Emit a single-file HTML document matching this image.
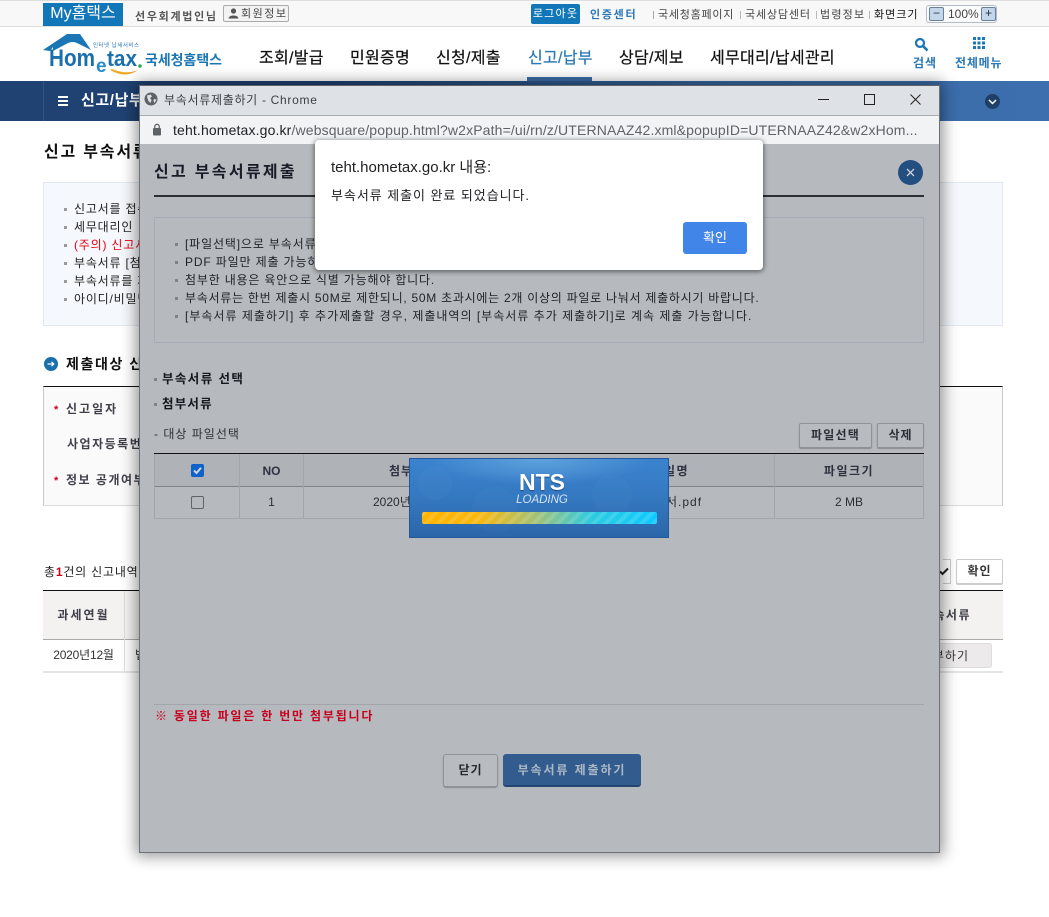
<!DOCTYPE html>
<html lang="ko"><head><meta charset="utf-8"><title>홈택스</title>
<style>
html,body{margin:0;padding:0}
body{width:1049px;height:917px;position:relative;overflow:hidden;background:#fff;font-family:"Liberation Sans","Noto Sans CJK KR","NanumGothic",sans-serif;color:#222}
.a{position:absolute}
.t{position:absolute;white-space:nowrap;line-height:16px;font-size:12px}
.b{font-weight:bold}
.c{text-align:center}
.n{font-size:16px;line-height:20px;color:#111;letter-spacing:.3px;-webkit-text-stroke:.2px currentColor;top:49px}
.sq{position:absolute;width:3px;height:3px;background:#999}
.sq2{position:absolute;width:3px;height:3px;background:#7f8387}
.btn{position:absolute;box-sizing:border-box;border:1px solid #8f9397;border-radius:2px;box-shadow:0 1px 1px #8a8e92;text-align:center;font-weight:bold;font-size:12px;color:#2b3038;background:#b8bcc0}
</style></head><body>
<!-- top bar -->
<div class="a" style="left:0;top:0;width:1049px;height:27px;background:#f8f8f8;border-top:1px solid #ddd;border-bottom:1px solid #ddd;box-sizing:border-box"></div>
<div class="a c" style="left:43px;top:3px;width:80px;height:23px;background:#1177b9;color:#fff;font-size:16px;line-height:22px">My홈택스</div>
<div class="t b" style="left:135px;top:9px;font-size:11px;color:#555;letter-spacing:1.700px">선우회계법인님</div>
<div class="a" style="left:223px;top:5px;width:66px;height:17px;box-sizing:border-box;border:1px solid #aaa;border-radius:2px;background:#f3f3f3"></div>
<svg class="a" style="left:228px;top:8px" width="11" height="11" viewBox="0 0 11 11"><circle cx="5.500" cy="3" r="2.600" fill="#555"/><path d="M0.500 10.500C1 6.500 10 6.500 10.500 10.500Z" fill="#555"/></svg>
<div class="t" style="left:241px;top:6px;font-size:11px;color:#444;letter-spacing:1.500px">회원정보</div>
<div class="a c" style="left:531px;top:4px;width:49px;height:20px;background:#1177b9;border-radius:2px;color:#fff;font-size:11px;line-height:20px;letter-spacing:1.200px">로그아웃</div>
<div class="t b" style="left:590px;top:7px;font-size:11px;color:#2a78b8;letter-spacing:1.700px">인증센터</div>
<div class="a" style="left:653px;top:11px;width:1px;height:8px;background:#aaa"></div>
<div class="t" style="left:658px;top:7px;font-size:11px;color:#444;letter-spacing:.75px">국세청홈페이지</div>
<div class="a" style="left:740px;top:11px;width:1px;height:8px;background:#bbb"></div>
<div class="t" style="left:745px;top:7px;font-size:11px;color:#444;letter-spacing:.85px">국세상담센터</div>
<div class="a" style="left:816px;top:11px;width:1px;height:8px;background:#bbb"></div>
<div class="t" style="left:820px;top:7px;font-size:11px;color:#444;letter-spacing:1.200px">법령정보</div>
<div class="a" style="left:869px;top:11px;width:1px;height:8px;background:#bbb"></div>
<div class="t" style="left:874px;top:7px;font-size:11px;color:#111;letter-spacing:1px">화면크기</div>
<div class="a" style="left:926px;top:5px;width:71px;height:18px;box-sizing:border-box;border:1px solid #b4bcc6;border-radius:3px;background:#fbfbfb"></div>
<div class="a c" style="left:929px;top:7px;width:15px;height:14px;box-sizing:border-box;border:1px solid #68809c;border-radius:2px;background:#c3d6ea;font-size:12px;line-height:11px;color:#234">−</div>
<div class="t" style="left:948px;top:6px;font-size:12px;color:#444">100%</div>
<div class="a c" style="left:981px;top:7px;width:15px;height:14px;box-sizing:border-box;border:1px solid #68809c;border-radius:2px;background:#c3d6ea;font-size:12px;line-height:11px;color:#234">+</div>

<!-- logo -->
<svg class="a" style="left:42px;top:33px" width="185" height="46" viewBox="0 0 185 46">
<path d="M1 17L25 1H38L49 17L35 10Q31 8 26 10L11 18V14L8 18Z" fill="#1a76b4"/>
<path d="M68 37Q84 46 96 37Q84 42 70 36Z" fill="#f5a623"/>
<text x="7" y="33" font-family="Liberation Sans" font-weight="bold" font-size="24" fill="#1a6fae" textLength="46" lengthAdjust="spacingAndGlyphs">Hom</text>
<text x="54" y="39" font-family="Liberation Sans" font-weight="bold" font-size="19" fill="#2a8ac8">e</text>
<text x="65" y="33" font-family="Liberation Sans" font-weight="bold" font-size="22" fill="#1a6fae" textLength="30" lengthAdjust="spacingAndGlyphs">tax</text>
<circle cx="98" cy="33" r="1.800" fill="#2fa84f"/>
<text x="51" y="14" font-family="Liberation Sans,Noto Sans CJK KR,sans-serif" font-size="5.500" fill="#2a78b8" textLength="46">인터넷 납세서비스</text>
<text x="103" y="32" font-family="Liberation Sans,Noto Sans CJK KR,sans-serif" font-weight="bold" font-size="14" fill="#1a76b4" textLength="77" lengthAdjust="spacingAndGlyphs">국세청홈택스</text>
</svg>

<!-- nav -->
<div class="t n" style="left:259px">조회/발급</div>
<div class="t n" style="left:350px">민원증명</div>
<div class="t n" style="left:436px">신청/제출</div>
<div class="t n" style="left:528px;color:#2a78b8">신고/납부</div>
<div class="a" style="left:527px;top:77px;width:65px;height:4px;background:#3c6ea8"></div>
<div class="t n" style="left:619px">상담/제보</div>
<div class="t n" style="left:710px">세무대리/납세관리</div>
<svg class="a" style="left:914px;top:37px" width="15" height="15" viewBox="0 0 15 15"><circle cx="6" cy="6" r="4" fill="none" stroke="#1a76b4" stroke-width="2.200"/><path d="M9 9L13.500 13.500" stroke="#1a76b4" stroke-width="2.600"/></svg>
<div class="t b" style="left:913px;top:55px;font-size:12px;color:#2a78b8;letter-spacing:1px">검색</div>
<svg class="a" style="left:972px;top:36px" width="14" height="14" viewBox="0 0 14 14" fill="#1a76b4"><rect x="1" y="1" width="3" height="3"/><rect x="5.500" y="1" width="3" height="3"/><rect x="10" y="1" width="3" height="3"/><rect x="1" y="5.500" width="3" height="3"/><rect x="5.500" y="5.500" width="3" height="3"/><rect x="10" y="5.500" width="3" height="3"/><rect x="1" y="10" width="3" height="3"/><rect x="5.500" y="10" width="3" height="3"/><rect x="10" y="10" width="3" height="3"/></svg>
<div class="t b" style="left:955px;top:55px;font-size:12px;color:#2a78b8;letter-spacing:.8px">전체메뉴</div>

<!-- blue band -->
<div class="a" style="left:0;top:81px;width:1049px;height:40px;background:linear-gradient(90deg,#1f4272 0%,#1f4272 30%,#3a6aa6 70%,#3d6fae 100%)"></div>
<div class="a" style="left:43px;top:81px;width:1px;height:40px;background:#2d5688"></div>
<div class="a" style="left:58px;top:96px;width:10px;height:2px;background:#fff;box-shadow:0 4px 0 #fff,0 8px 0 #fff"></div>
<div class="t b" style="left:81px;top:91px;font-size:15px;line-height:20px;color:#fff;letter-spacing:.6px">신고/납부</div>
<div class="a" style="left:985px;top:94px;width:15px;height:15px;border-radius:50%;background:#1f3f68"></div>
<svg class="a" style="left:988px;top:98px" width="9" height="8" viewBox="0 0 9 8"><path d="M1 2L4.500 5.500 8 2" fill="none" stroke="#fff" stroke-width="1.500"/></svg>

<!-- background page -->
<div class="t b" style="left:44px;top:143px;font-size:16px;line-height:20px;color:#111;letter-spacing:1.800px">신고 부속서류</div>
<div class="a" style="left:43px;top:182px;width:960px;height:144px;box-sizing:border-box;border:1px solid #e3e8f0;background:#f5f8fc"></div>
<div class="sq" style="left:64px;top:208px"></div><div class="t" style="left:74px;top:201px;color:#222;letter-spacing:.8px">신고서를 접수</div>
<div class="sq" style="left:64px;top:226px"></div><div class="t" style="left:74px;top:219px;color:#222;letter-spacing:.8px">세무대리인</div>
<div class="sq" style="left:64px;top:244px"></div><div class="t" style="left:74px;top:237px;color:#e8000c;letter-spacing:.8px">(주의) 신고서</div>
<div class="sq" style="left:64px;top:262px"></div><div class="t" style="left:74px;top:255px;color:#222;letter-spacing:.8px">부속서류 [첨부</div>
<div class="sq" style="left:64px;top:280px"></div><div class="t" style="left:74px;top:273px;color:#222;letter-spacing:.8px">부속서류를 제</div>
<div class="sq" style="left:64px;top:298px"></div><div class="t" style="left:74px;top:291px;color:#222;letter-spacing:.8px">아이디/비밀번호</div>

<div class="a" style="left:44px;top:357px;width:14px;height:14px;border-radius:50%;background:#1a6eaa"></div>
<svg class="a" style="left:47px;top:360px" width="8" height="8" viewBox="0 0 8 8"><path d="M0.500 4H6.500M4.500 1.800L6.800 4 4.500 6.200" fill="none" stroke="#fff" stroke-width="1.200"/></svg>
<div class="t b" style="left:66px;top:355px;font-size:14px;line-height:18px;color:#111;letter-spacing:1.600px">제출대상 신고</div>
<div class="a" style="left:43px;top:386px;width:960px;height:120px;box-sizing:border-box;border-top:1px solid #111;border-left:1px solid #c8c8c8;border-right:1px solid #c8c8c8;border-bottom:1px solid #ddd;background:#fafafa"></div>
<div class="t b" style="left:54px;top:402px;font-size:11px;color:#c8001e">*</div>
<div class="t b" style="left:66px;top:401px;color:#40404a;letter-spacing:2px">신고일자</div>
<div class="t b" style="left:67px;top:436px;color:#40404a;letter-spacing:1.500px">사업자등록번호</div>
<div class="t b" style="left:54px;top:473px;font-size:11px;color:#c8001e">*</div>
<div class="t b" style="left:66px;top:472px;color:#40404a;letter-spacing:1.500px">정보 공개여부</div>

<div class="t" style="left:44px;top:564px;color:#222;letter-spacing:.8px">총<span class="b" style="color:#d0021b">1</span>건의 신고내역</div>
<div class="a" style="left:943px;top:559px;width:8px;height:25px;box-sizing:border-box;border:1px solid #ccc;border-left:0;background:#fff"></div>
<svg class="a" style="left:939px;top:567px" width="10" height="9" viewBox="0 0 10 9"><path d="M1 4.500L3.500 7 9 1.500" fill="none" stroke="#222" stroke-width="2"/></svg>
<div class="a c b" style="left:956px;top:559px;width:47px;height:25px;box-sizing:border-box;border:1px solid #ccc;border-radius:2px;box-shadow:0 1px 0 #ccc;background:#fff;font-size:12px;line-height:23px;color:#333;letter-spacing:1px">확인</div>
<div class="a" style="left:43px;top:590px;width:960px;height:50px;box-sizing:border-box;border-top:1px solid #111;border-bottom:1px solid #aaa;background:#f3f2f0"></div>
<div class="a" style="left:124px;top:591px;width:1px;height:80px;background:#e0e0e0"></div>
<div class="t b c" style="left:43px;top:607px;width:81px;color:#40404a;letter-spacing:2px">과세연월</div>
<div class="t b" style="right:78px;top:607px;color:#40404a;letter-spacing:1.500px">부속서류</div>
<div class="a" style="left:43px;top:671px;width:960px;height:2px;background:#e4e4e4"></div>
<div class="t c" style="left:43px;top:647px;width:81px;font-size:12px;letter-spacing:-.2px;color:#333">2020년12월</div>
<div class="t" style="left:135px;top:647px;color:#333">법</div>
<div class="a" style="left:930px;top:643px;width:62px;height:25px;box-sizing:border-box;border:1px solid #ddd;border-radius:3px;background:#eceaea"></div>
<div class="t" style="right:80px;top:648px;color:#333;letter-spacing:1px">첨부하기</div>

<!-- popup shadow -->
<div class="a" style="left:139px;top:85px;width:801px;height:768px;box-shadow:0 0 14px 3px rgba(0,0,0,.42)"></div>
<div class="a" style="left:139px;top:85px;width:801px;height:768px;background:#b6babe;border:1px solid #6e7276;box-sizing:border-box;border-top-color:#5f6368"></div>
<div class="a" style="left:140px;top:86px;width:799px;height:29px;background:#dee1e6"></div>
<div class="a" style="left:140px;top:115px;width:799px;height:1px;background:#a8abb0"></div>
<div class="a" style="left:140px;top:116px;width:799px;height:28px;background:#f1f3f4"></div>
<svg class="a" style="left:144px;top:92px" width="14" height="14" viewBox="0 0 14 14"><circle cx="7" cy="7" r="6.500" fill="#5f6368"/><path d="M3 3.500L6.500 2.500 8 4.500 6 6 7.500 8 6.500 11 4.500 9 3.500 6.500ZM10 7L12.500 7.500 10.500 11 9.500 9Z" fill="#dee1e6"/></svg>
<div class="t" style="left:164px;top:92px;font-size:12px;color:#3c4043;letter-spacing:.7px">부속서류제출하기 - Chrome</div>
<div class="a" style="left:818px;top:99px;width:11px;height:1px;background:#222"></div>
<div class="a" style="left:864px;top:94px;width:11px;height:11px;box-sizing:border-box;border:1px solid #222"></div>
<svg class="a" style="left:909px;top:93px" width="13" height="13" viewBox="0 0 13 13"><path d="M1.500 1.500L11.500 11.500M11.500 1.500L1.500 11.500" stroke="#222" stroke-width="1"/></svg>
<svg class="a" style="left:152px;top:123px" width="10" height="13" viewBox="0 0 10 13"><rect x="1" y="5" width="8" height="7.500" rx="1" fill="#5f6368"/><path d="M2.800 5V3.500A2.200 2.200 0 0 1 7.200 3.500V5" fill="none" stroke="#5f6368" stroke-width="1.300"/></svg>
<div class="t" style="left:173px;top:122px;width:760px;overflow:hidden;font-size:14px;color:#5f6368;letter-spacing:.14px"><span style="color:#202124">teht.hometax.go.kr</span>/websquare/popup.html?w2xPath=/ui/rn/z/UTERNAAZ42.xml&amp;popupID=UTERNAAZ42&amp;w2xHom...</div>

<!-- popup content -->
<div class="t b" style="left:154px;top:163px;font-size:16px;line-height:20px;color:#181c28;letter-spacing:2.300px">신고 부속서류제출</div>
<div class="a" style="left:154px;top:195px;width:770px;height:2px;background:#2c3034"></div>
<div class="a" style="left:898px;top:160px;width:25px;height:25px;border-radius:50%;background:#234e80"></div>
<svg class="a" style="left:906px;top:168px" width="9" height="9" viewBox="0 0 9 9"><path d="M1 1L8 8M8 1L1 8" stroke="#cdd3da" stroke-width="1.300"/></svg>

<div class="a" style="left:154px;top:217px;width:770px;height:126px;box-sizing:border-box;border:1px solid #a4abb6"></div>
<div class="sq2" style="left:175px;top:243px"></div><div class="t" style="left:185px;top:236px;color:#1e2228;letter-spacing:.85px">[파일선택]으로 부속서류</div>
<div class="sq2" style="left:175px;top:261px"></div><div class="t" style="left:185px;top:254px;color:#1e2228;letter-spacing:.85px">PDF 파일만 제출 가능하</div>
<div class="sq2" style="left:175px;top:279px"></div><div class="t" style="left:185px;top:272px;color:#1e2228;letter-spacing:.81px">첨부한 내용은 육안으로 식별 가능해야 합니다.</div>
<div class="sq2" style="left:175px;top:297px"></div><div class="t" style="left:185px;top:290px;color:#1e2228;letter-spacing:.73px">부속서류는 한번 제출시 50M로 제한되니, 50M 초과시에는 2개 이상의 파일로 나눠서 제출하시기 바랍니다.</div>
<div class="sq2" style="left:175px;top:315px"></div><div class="t" style="left:185px;top:308px;color:#1e2228;letter-spacing:1px">[부속서류 제출하기] 후 추가제출할 경우, 제출내역의 [부속서류 추가 제출하기]로 계속 제출 가능합니다.</div>

<div class="sq2" style="left:154px;top:378px"></div><div class="t b" style="left:162px;top:371px;font-size:12.500px;color:#14181f;letter-spacing:1.400px">부속서류 선택</div>
<div class="sq2" style="left:154px;top:403px"></div><div class="t b" style="left:162px;top:396px;font-size:12.500px;color:#14181f;letter-spacing:1.200px">첨부서류</div>
<div class="t" style="left:154px;top:426px;color:#2f3338;letter-spacing:1px">- 대상 파일선택</div>
<div class="btn" style="left:799px;top:423px;width:73px;height:25px;line-height:23px;letter-spacing:1.200px">파일선택</div>
<div class="btn" style="left:877px;top:423px;width:47px;height:25px;line-height:23px;letter-spacing:1px">삭제</div>

<div class="a" style="left:154px;top:453px;width:770px;height:1px;background:#111"></div>
<div class="a" style="left:154px;top:454px;width:770px;height:32px;background:#afb3b7"></div>
<div class="a" style="left:154px;top:486px;width:770px;height:1px;background:#808488"></div>
<div class="a" style="left:154px;top:487px;width:770px;height:32px;box-sizing:border-box;border-bottom:1px solid #a2a6aa"></div>
<div class="a" style="left:154px;top:454px;width:1px;height:65px;background:#a2a6aa"></div>
<div class="a" style="left:239px;top:454px;width:1px;height:65px;background:#a2a6aa"></div>
<div class="a" style="left:303px;top:454px;width:1px;height:65px;background:#a2a6aa"></div>
<div class="a" style="left:774px;top:454px;width:1px;height:65px;background:#a2a6aa"></div>
<div class="a" style="left:923px;top:454px;width:1px;height:65px;background:#a2a6aa"></div>
<div class="a" style="left:191px;top:464px;width:13px;height:13px;border-radius:2px;background:#0f62c8"></div>
<svg class="a" style="left:191px;top:464px" width="13" height="13" viewBox="0 0 13 13"><path d="M3 6.500L5.500 9 10 3.800" fill="none" stroke="#cfd4da" stroke-width="2"/></svg>
<div class="a" style="left:191px;top:496px;width:13px;height:13px;box-sizing:border-box;border:1px solid #5f6368;border-radius:2px;background:#b6babe"></div>
<div class="t b c" style="left:240px;top:463px;width:63px;color:#2d3140">NO</div>
<div class="t c" style="left:240px;top:494px;width:63px;color:#2a2e34">1</div>
<div class="t b" style="left:389px;top:463px;color:#2d3140;letter-spacing:1px">첨부</div>
<div class="t" style="left:373px;top:494px;color:#2a2e34">2020년</div>
<div class="t b" style="left:664px;top:463px;color:#2d3140;letter-spacing:1.500px">일명</div>
<div class="t" style="left:666px;top:494px;color:#2a2e34;letter-spacing:1px">서.pdf</div>
<div class="t b c" style="left:775px;top:463px;width:148px;color:#2d3140;letter-spacing:1.500px">파일크기</div>
<div class="t c" style="left:775px;top:494px;width:148px;color:#2a2e34">2 MB</div>

<!-- loading -->
<div class="a" style="left:409px;top:458px;width:260px;height:80px;box-sizing:border-box;border:1px solid #22589a;overflow:hidden;background:radial-gradient(ellipse 110px 26px at 50% 0,#5ea2dc 0%,rgba(94,162,220,0) 100%),linear-gradient(180deg,#3b83cf 0%,#3478c0 50%,#2c66aa 100%)">
<div class="a" style="left:8px;top:7px;width:34px;height:34px;border-radius:50%;background:rgba(255,255,255,.025)"></div>
<div class="a" style="left:62px;top:28px;width:46px;height:46px;border-radius:50%;background:rgba(255,255,255,.02)"></div>
<div class="a" style="left:182px;top:16px;width:40px;height:40px;border-radius:50%;background:rgba(255,255,255,.02)"></div>
</div>
<div class="t b c" style="left:412px;top:470px;width:260px;font-size:23px;line-height:24px;color:#fff;text-shadow:0 1px 1px #1e4a80">NTS</div>
<div class="t c" style="left:412px;top:493px;width:260px;font-size:11.500px;line-height:14px;font-style:italic;color:#d5e4f3">LOADING</div>
<div class="a" style="left:422px;top:512px;width:235px;height:12px;border-radius:2px;background:repeating-linear-gradient(135deg,rgba(255,255,255,.13) 0 4px,rgba(255,255,255,0) 4px 8.500px),linear-gradient(90deg,#ffb400 0%,#f7b811 25%,#9dc27d 50%,#2ecbe0 72%,#0ccaff 100%)"></div>

<div class="a" style="left:154px;top:704px;width:770px;height:1px;background:#a2a6aa"></div>
<div class="t b" style="left:155px;top:708px;color:#c8001e;letter-spacing:1.800px">※ 동일한 파일은 한 번만 첨부됩니다</div>
<div class="btn" style="left:443px;top:754px;width:55px;height:33px;line-height:31px;border-radius:3px;color:#23272d;letter-spacing:1px">닫기</div>
<div class="a c b" style="left:503px;top:754px;width:138px;height:33px;border-radius:3px;background:#325c8e;border-bottom:2px solid #234672;box-sizing:border-box;color:#acb8c6;font-size:12px;line-height:32px;letter-spacing:1.900px">부속서류 제출하기</div>

<!-- alert -->
<div class="a" style="left:315px;top:140px;width:448px;height:130px;background:#fff;border-radius:4px;box-shadow:0 1px 5px 1px rgba(0,0,0,.45)"></div>
<div class="t" style="left:331px;top:159px;font-size:15px;line-height:18px;color:#202124">teht.hometax.go.kr 내용:</div>
<div class="t" style="left:331px;top:188px;font-size:13px;color:#202124;letter-spacing:.95px">부속서류 제출이 완료 되었습니다.</div>
<div class="a c" style="left:683px;top:222px;width:64px;height:32px;border-radius:3px;background:#4285e8;color:#fff;font-size:13px;line-height:31px">확인</div>
</body></html>
